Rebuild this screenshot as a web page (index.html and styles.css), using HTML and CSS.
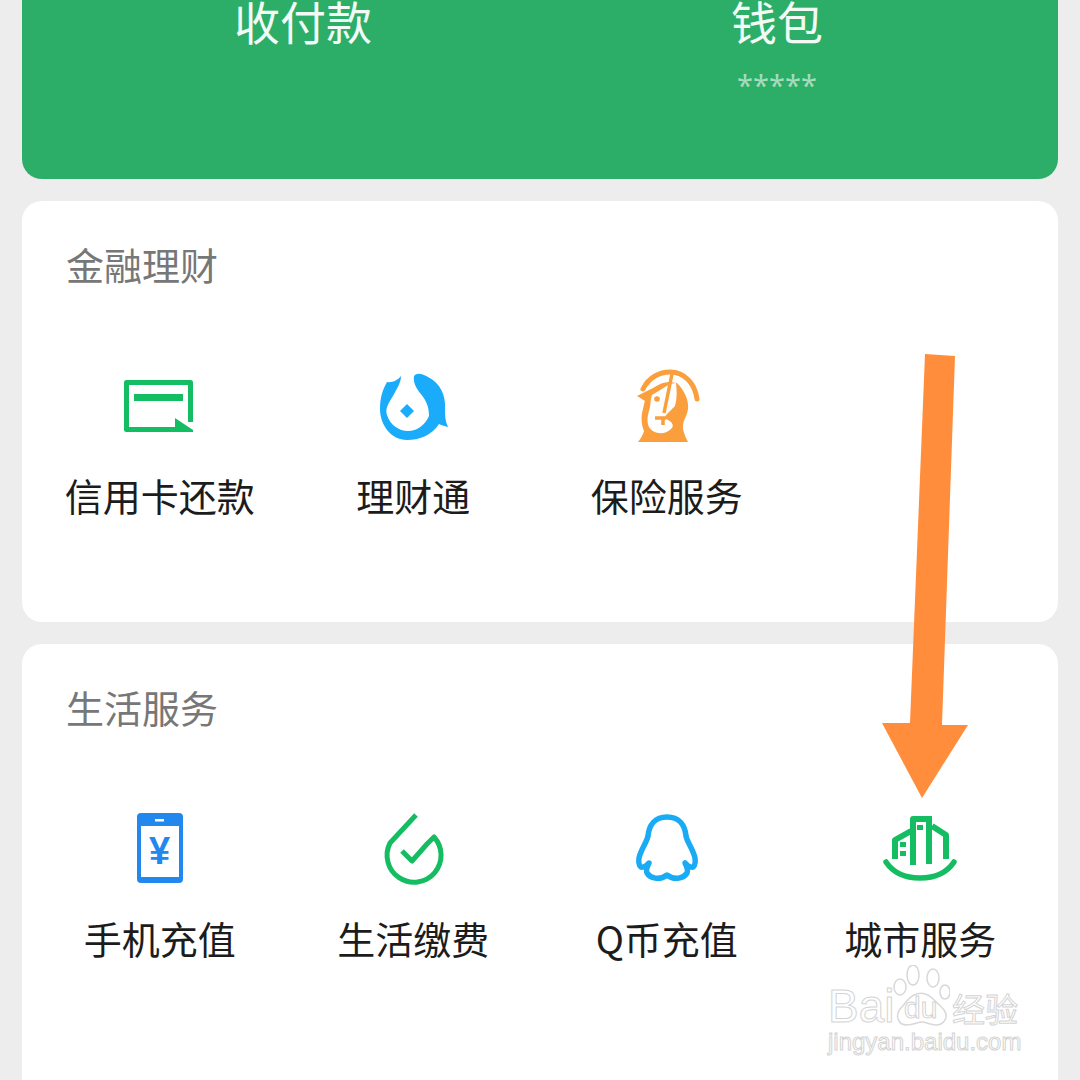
FILE: index.html
```html
<!DOCTYPE html>
<html lang="zh-CN">

<head>
    <meta charset="UTF-8">
    <meta name="viewport" content="width=device-width, initial-scale=1.0">
    <title>服务</title>
    <link rel="stylesheet" href="styles.css">
</head>

<body>
    <div class="page">
        <!-- Green header card -->
        <div class="header-card">
            <div class="header-item">
                <div class="header-label">收付款</div>
            </div>
            <div class="header-item">
                <div class="header-label">钱包</div>
                <div class="header-mask">*****</div>
            </div>
        </div>

        <!-- Finance -->
        <div class="card">
            <div class="card-title">金融理财</div>
            <div class="grid">
                <div class="item">
                    <svg class="icon" viewBox="0 0 80 80">
                        <path d="M70.5 53V13.5H6.5V60.500H56" fill="none" stroke="#15bd62" stroke-width="5" stroke-linejoin="round" />
                        <rect x="14" y="25" width="49" height="7" fill="#15bd62" />
                        <path d="M55 49L73 61V63H55Z" fill="#15bd62" />
                    </svg>
                    <div class="item-label">信用卡还款</div>
                </div>
                <div class="item">
                    <svg class="icon" viewBox="0 0 80 80">
                        <path d="M41 7C44 3 50 5 55 8C67 14 73 26 72 40C72 46 72 52 75 58C71 57 68 56 66 55C58 67 46 71 34 71C18 71 7 56 7 40C7 28 10 20 14 13C19 14 25 11 28 7C28 14 24 19 20 27C15 35 12 40 14 46C17 56 26 62 35 62C44 62 52 56 56 47C56 36 52 30 47 24C43 19 40 13 41 7Z" fill="#1aabfb" />
                        <path d="M34 35L41 42L34 49L27 42Z" fill="#1aabfb" />
                    </svg>
                    <div class="item-label">理财通</div>
                </div>
                <div class="item">
                    <svg class="icon" viewBox="0 0 80 80">
                        <path d="M16 20C22 8 33 3 43 3C58 3 68 15 70 30" fill="none" stroke="#fb9f3c" stroke-width="5" stroke-linecap="round" />
                        <path d="M10 27L26 19C32 15 37 13 42 13L50 14C58 22 62 32 61 40C60 48 55 52 56 60C57 65 59 69 61 73H11C14 69 16 66 17 62C14 55 14 46 16 40C17 36 17 34 18 32Z" fill="#fb9f3c" />
                        <path d="M43 15L25 26C23 32 24 36 22 42C20 48 20 54 22 58C26 65 38 67 45 59C47 56 45 53 41 51C38 50 38 49 39 46L48 37C50 30 50 22 49 14Z" fill="#fff" />
                        <path d="M45 5L37 44M28 49H39M36 48V56" fill="none" stroke="#fb9f3c" stroke-width="3.500" />
                        <circle cx="30" cy="30" r="2.800" fill="#fb9f3c" />
                    </svg>
                    <div class="item-label">保险服务</div>
                </div>
            </div>
        </div>

        <!-- Life services -->
        <div class="card card-last">
            <div class="card-title">生活服务</div>
            <div class="grid">
                <div class="item">
                    <svg class="icon" viewBox="0 3 80 80">
                        <rect x="17" y="4" width="46" height="70" rx="4" fill="#2388ee" />
                        <rect x="21" y="17" width="38" height="51" fill="#fff" />
                        <rect x="35" y="10" width="9" height="2.500" fill="#fff" />
                        <text class="yen" x="39.500" y="55" text-anchor="middle">¥</text>
                    </svg>
                    <div class="item-label">手机充值</div>
                </div>
                <div class="item">
                    <svg class="icon" viewBox="0 3 80 80">
                        <path d="M43 6L17 34A27 27 0 1 0 61 28L54 35L39 52L29 42" fill="none" stroke="#15bd62" stroke-width="5" stroke-linejoin="round" />
                    </svg>
                    <div class="item-label">生活缴费</div>
                </div>
                <div class="item">
                    <svg class="icon" viewBox="0 3 80 80">
                        <path d="M40 8C52 8 58 16 59 27C60 33 66 40 68 49C69 55 67 59 64 58C61 58 59 55 58 54C60 58 61 62 60 64C57 69 48 72 40 66C32 72 23 69 20 64C19 62 20 58 22 54C21 55 19 58 16 58C13 59 11 55 12 49C14 40 20 33 21 27C22 16 28 8 40 8Z" fill="none" stroke="#1aabf5" stroke-width="5.500" stroke-linejoin="round" />
                    </svg>
                    <div class="item-label">Q币充值</div>
                </div>
                <div class="item">
                    <svg class="icon" viewBox="0 3 80 80">
                        <path d="M6 53C14 65 27 69 40 69C53 69 66 65 74 53" fill="none" stroke="#15bd62" stroke-width="5.500" stroke-linecap="round" />
                        <path d="M33 56V10H52M49 10V55M52 17L66 26V50M31 22L15 31V50" fill="none" stroke="#15bd62" stroke-width="6" stroke-linejoin="round" />
                        <rect x="37" y="16" width="6" height="5" fill="#15bd62" />
                        <rect x="20" y="33" width="6" height="5" fill="#15bd62" />
                        <rect x="20" y="42" width="6" height="5" fill="#15bd62" />
                    </svg>
                    <div class="item-label">城市服务</div>
                </div>
            </div>
        </div>
    </div>

    <!-- Annotation arrow drawn over the screenshot -->
    <svg class="arrow" viewBox="0 0 1080 1080">
        <path d="M925 354L955 356L942 725L968 725L922 798L882 723L910 723Z" fill="#ff8d3c" />
    </svg>

    <!-- Baidu watermark -->
    <div class="watermark">
        <div class="mark-top">
            <span class="mark-bai">Bai</span>
            <svg class="mark-paw" viewBox="0 0 60 66">
                <g fill="#fff" stroke="#d8d8d8" stroke-width="1.500">
                    <ellipse cx="23" cy="10" rx="6" ry="10" />
                    <ellipse cx="43" cy="13" rx="6" ry="9" />
                    <ellipse cx="10" cy="22" rx="6" ry="8" />
                    <ellipse cx="55" cy="27" rx="5" ry="7" />
                    <path d="M10 44C15 39 18 33 24 30C30 27 37 28 42 33C47 38 51 41 54 45C59 52 54 60 46 60C40 60 36 57 32 57C28 57 23 60 17 60C8 60 5 51 10 44Z" />
                </g>
            </svg>
            <span class="mark-du">du</span>
            <span class="mark-jy">经验</span>
        </div>
        <div class="mark-url">jingyan.baidu.com</div>
    </div>
</body>

</html>
```

FILE: styles.css
```css
body {
    margin: 0px;
    padding: 0px;
    font-family: "Noto Sans CJK SC", "Noto Sans", sans-serif;
    background-color: #ededed;
}

.page {
    height: 1080px;
    overflow: hidden;
    padding: 0px 22px;
    box-sizing: border-box;
    display: flex;
    flex-direction: column;
    gap: 22px;
}

.header-card {
    flex-shrink: 0;
    height: 179px;
    padding: 0px 44px;
    box-sizing: border-box;
    background-color: #2cae68;
    border-radius: 0px 0px 20px 20px;
    display: grid;
    grid-template-columns: 1fr 1fr;
    overflow: hidden;
}

.header-item {
    text-align: center;
}

.header-label {
    font-size: 46px;
    line-height: 40px;
    color: #f2fbf5;
}

.header-mask {
    margin-top: 20px;
    font-family: "Noto Sans", sans-serif;
    font-size: 29px;
    line-height: 50px;
    color: #a5dcb9;
}

.card {
    flex-shrink: 0;
    padding: 38px 11px 102px;
    background-color: #fff;
    border-radius: 20px;
}

.card-last {
    padding-bottom: 200px;
}

.card-title {
    padding-left: 33px;
    font-size: 38px;
    line-height: 50px;
    color: #777;
}

.grid {
    margin-top: 80px;
    display: grid;
    grid-template-columns: repeat(4, 1fr);
}

.item {
    display: flex;
    flex-direction: column;
    align-items: center;
    gap: 21px;
}

.icon {
    display: block;
    width: 80px;
    height: 80px;
}

.item-label {
    font-size: 38px;
    line-height: 50px;
    color: #1c1c1c;
    white-space: nowrap;
}

.yen {
    font-family: "Liberation Sans", sans-serif;
    font-size: 38px;
    font-weight: bold;
    fill: #2388ee;
}

.arrow {
    position: absolute;
    left: 0px;
    top: 0px;
    width: 1080px;
    height: 1080px;
}

.watermark {
    position: absolute;
    left: 828px;
    top: 965px;
    width: 196px;
    color: #fff;
    -webkit-text-stroke: 1px #d4d4d4;
}

.mark-top {
    position: relative;
    height: 66px;
    display: flex;
    align-items: flex-end;
}

.mark-bai {
    width: 62px;
    font-family: "Liberation Sans", sans-serif;
    font-size: 46px;
    line-height: 50px;
}

.mark-paw {
    width: 60px;
    height: 66px;
}

.mark-du {
    position: absolute;
    left: 76px;
    bottom: 5px;
    font-family: "Liberation Sans", sans-serif;
    font-size: 30px;
    line-height: 36px;
}

.mark-jy {
    margin-left: 2px;
    font-size: 33px;
    line-height: 46px;
    white-space: nowrap;
}

.mark-url {
    margin-top: -3px;
    font-family: "Liberation Sans", sans-serif;
    font-size: 24px;
    line-height: 28px;
    white-space: nowrap;
}
```
